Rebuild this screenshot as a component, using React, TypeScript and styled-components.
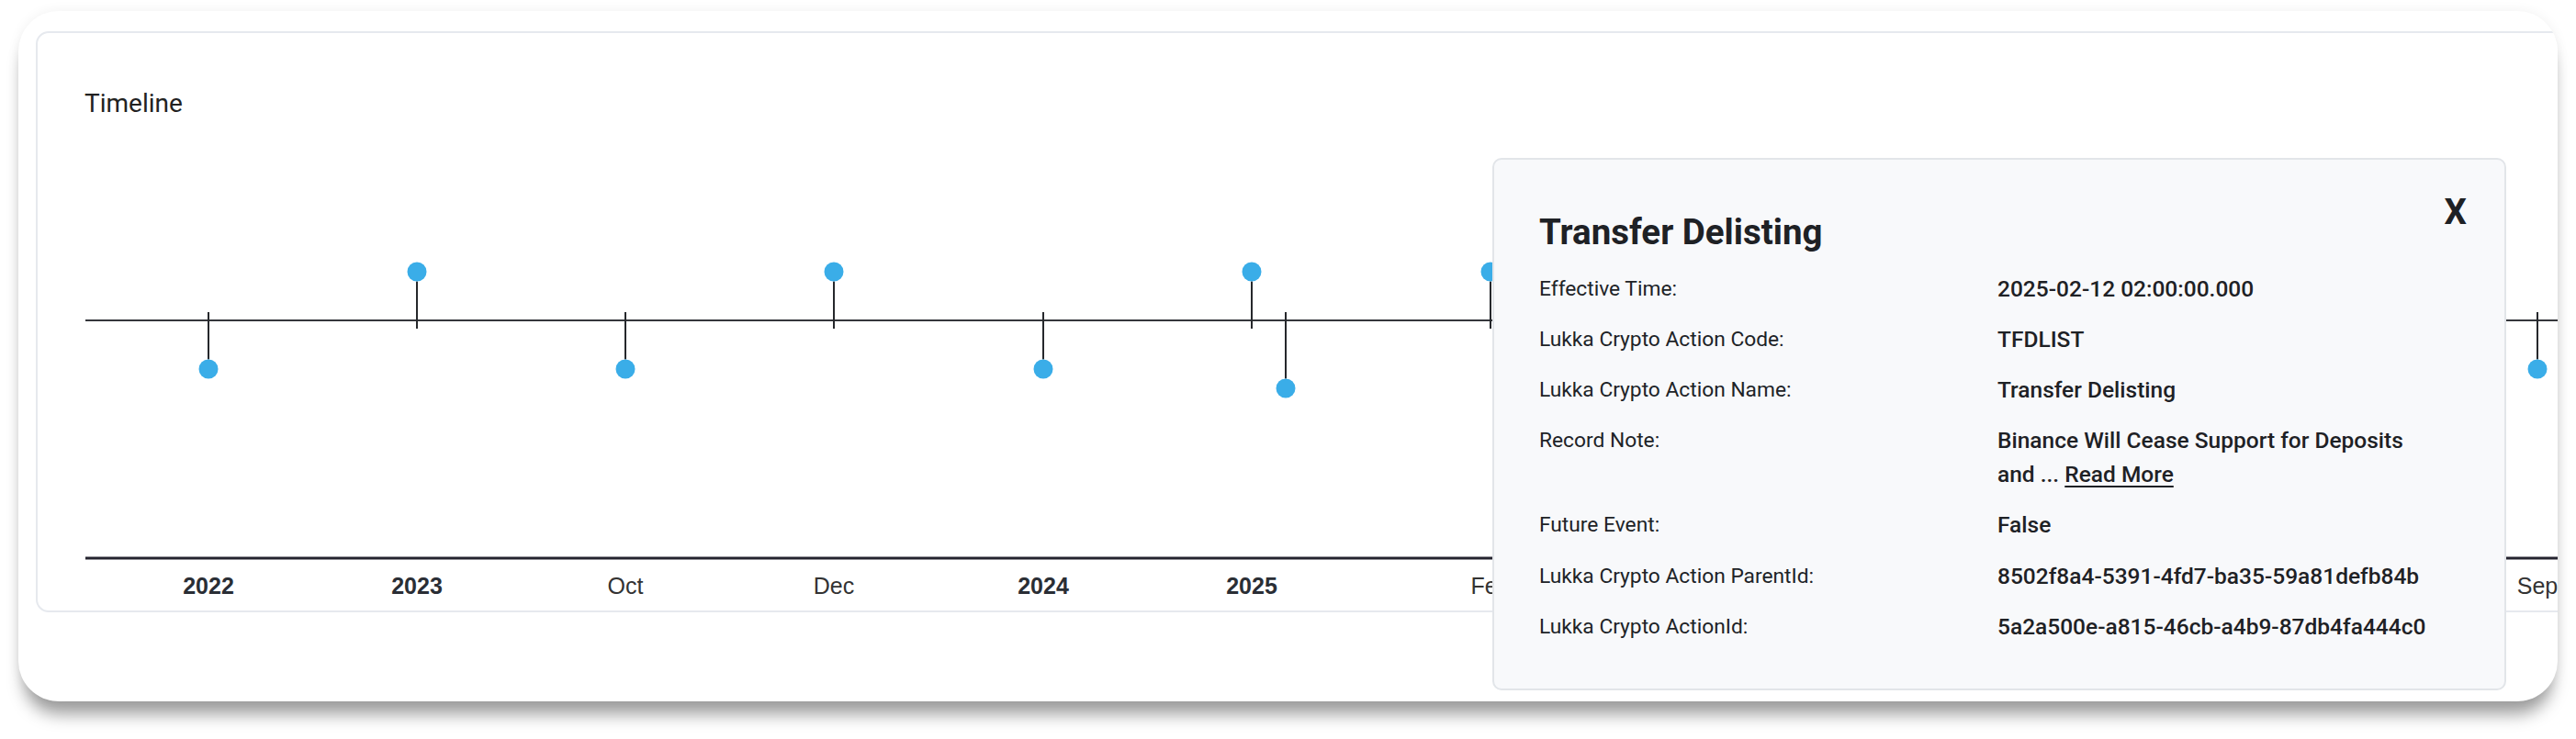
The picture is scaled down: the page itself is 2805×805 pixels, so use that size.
import React from "react"
import styled, { createGlobalStyle } from "styled-components"

const GlobalStyle = createGlobalStyle`
    html, body {
        margin: 0;
        padding: 0;
        background: #ffffff;
    }
    body {
        font-family: Roboto, "Noto Sans", sans-serif;
        color: #202327;
    }
`

const OX = 92
const OY = 240
const AXIS_Y = 349 - OY
const BASE_Y = 608 - OY

type Side = "up" | "down"

interface TimelineEvent {
    x: number
    side: Side
    level?: number
}

interface AxisLabel {
    x: number
    text: string
    year?: boolean
}

const events: TimelineEvent[] = [
    { x: 227, side: "down" },
    { x: 454, side: "up" },
    { x: 681, side: "down" },
    { x: 908, side: "up" },
    { x: 1136, side: "down" },
    { x: 1363, side: "up" },
    { x: 1400, side: "down", level: 2 },
    { x: 1623, side: "up" },
    { x: 1850, side: "down" },
    { x: 2077, side: "up" },
    { x: 2304, side: "down" },
    { x: 2531, side: "up" },
    { x: 2763, side: "down" },
]

// months under the open popup are left out, they can't be seen anyway
const labels: AxisLabel[] = [
    { x: 227, text: "2022", year: true },
    { x: 454, text: "2023", year: true },
    { x: 681, text: "Oct" },
    { x: 908, text: "Dec" },
    { x: 1136, text: "2024", year: true },
    { x: 1363, text: "2025", year: true },
    { x: 1623, text: "Feb" },
    { x: 2763, text: "Sep" },
]

const details: { label: string; value: string; note?: boolean }[] = [
    { label: "Effective Time:", value: "2025-02-12 02:00:00.000" },
    { label: "Lukka Crypto Action Code:", value: "TFDLIST" },
    { label: "Lukka Crypto Action Name:", value: "Transfer Delisting" },
    { label: "Record Note:", value: "Binance Will Cease Support for Deposits and ...", note: true },
    { label: "Future Event:", value: "False" },
    { label: "Lukka Crypto Action ParentId:", value: "8502f8a4-5391-4fd7-ba35-59a81defb84b" },
    { label: "Lukka Crypto ActionId:", value: "5a2a500e-a815-46cb-a4b9-87db4fa444c0" },
]

const Page = styled.main`
    box-sizing: border-box;
    height: 805px;
    padding: 12px 20px 0 20px;
    background: #ffffff;
`

const Frame = styled.section`
    position: relative;
    box-sizing: border-box;
    height: 752px;
    padding: 22px 0 0 19px;
    background: #ffffff;
    border-radius: 44px;
    overflow: hidden;
    box-shadow: 0 20px 18px -6px rgba(0, 0, 0, 0.38), 0 0 14px rgba(0, 0, 0, 0.06);
`

const ChartCard = styled.div`
    box-sizing: border-box;
    height: 633px;
    margin-right: -60px;
    padding: 60px 0 0 51px;
    border: 2px solid #e6e9ee;
    border-radius: 14px;
    background: #ffffff;
`

const ChartTitle = styled.h3`
    margin: 0;
    font-family: Roboto, sans-serif;
    font-size: 28px;
    font-weight: 400;
    line-height: normal;
    color: #222222;
`

const ChartSvg = styled.svg`
    display: block;
    margin-top: 111px;
    width: 100%;
    height: 425px;
    overflow: visible;
`

const Tick = styled.text<{ $year?: boolean }>`
    font-family: "Liberation Sans", Arial, sans-serif;
    font-size: 25px;
    font-weight: ${p => (p.$year ? 700 : 400)};
    fill: ${p => (p.$year ? "#2a2e35" : "#333333")};
`

const Popup = styled.aside`
    position: absolute;
    left: 1605px;
    top: 160px;
    box-sizing: border-box;
    width: 1104px;
    height: 580px;
    padding: 34px 41px 0 49px;
    background: #f8f9fb;
    border: 2px solid #e2e5e9;
    border-radius: 10px;
`

const PopupHeader = styled.header`
    display: flex;
    justify-content: space-between;
    align-items: flex-start;
`

const PopupTitle = styled.h2`
    margin: 22px 0 0 0;
    font-size: 38.5px;
    font-weight: 700;
    line-height: normal;
    color: #1e2125;
`

const CloseButton = styled.button`
    padding: 0;
    border: none;
    background: none;
    font-family: Roboto, sans-serif;
    font-size: 38.5px;
    font-weight: 700;
    line-height: normal;
    color: #1e2125;
    cursor: pointer;
`

const DetailGrid = styled.dl`
    display: grid;
    grid-template-columns: 499px 470px;
    row-gap: 18.5px;
    margin: 21.5px 0 0 0;
`

const Label = styled.dt`
    margin: 0;
    font-size: 22.75px;
    font-weight: 400;
    line-height: 36.75px;
    color: #202327;
`

const Value = styled.dd<{ $wrap?: boolean }>`
    margin: 0;
    font-size: 24.5px;
    font-weight: 500;
    line-height: 36.75px;
    color: #1e2125;
    white-space: ${p => (p.$wrap ? "normal" : "nowrap")};
`

const ReadMore = styled.a`
    color: inherit;
    text-decoration: underline;
    text-decoration-thickness: 2px;
    text-underline-offset: 4px;
    cursor: pointer;
`

const Stem: React.FC<{ ev: TimelineEvent }> = ({ ev }) => {
    const x = ev.x - OX
    const r = 10.5
    if (ev.side === "up") {
        const cy = 296 - OY
        return (
            <g>
                <line x1={x} y1={cy + r} x2={x} y2={AXIS_Y + 9} stroke="#26282c" strokeWidth={2} />
                <circle cx={x} cy={cy} r={r} fill="#3aade8" />
            </g>
        )
    }
    const cy = (ev.level === 2 ? 423 : 402) - OY
    return (
        <g>
            <line x1={x} y1={AXIS_Y - 9} x2={x} y2={cy - r} stroke="#26282c" strokeWidth={2} />
            <circle cx={x} cy={cy} r={r} fill="#3aade8" />
        </g>
    )
}

const Timeline: React.FC = () => (
    <ChartSvg>
        <line x1={1} y1={AXIS_Y} x2={2800} y2={AXIS_Y} stroke="#35373b" strokeWidth={2} />
        {events.map((ev, i) => (
            <Stem key={i} ev={ev} />
        ))}
        <line x1={1} y1={BASE_Y} x2={2800} y2={BASE_Y} stroke="#24232e" strokeWidth={3} />
        {labels.map(l => (
            <Tick key={l.text} $year={l.year} x={l.x - OX} y={647 - OY} textAnchor="middle">
                {l.text}
            </Tick>
        ))}
    </ChartSvg>
)

const App: React.FC = () => {
    return (
        <Page>
            <GlobalStyle />
            <Frame>
                <ChartCard>
                    <ChartTitle>Timeline</ChartTitle>
                    <Timeline />
                </ChartCard>
                <Popup>
                    <PopupHeader>
                        <PopupTitle>Transfer Delisting</PopupTitle>
                        <CloseButton>X</CloseButton>
                    </PopupHeader>
                    <DetailGrid>
                        {details.map(d => (
                            <React.Fragment key={d.label}>
                                <Label>{d.label}</Label>
                                <Value $wrap={d.note}>
                                    {d.value}
                                    {d.note && <> <ReadMore>Read More</ReadMore></>}
                                </Value>
                            </React.Fragment>
                        ))}
                    </DetailGrid>
                </Popup>
            </Frame>
        </Page>
    )
}

export default App
